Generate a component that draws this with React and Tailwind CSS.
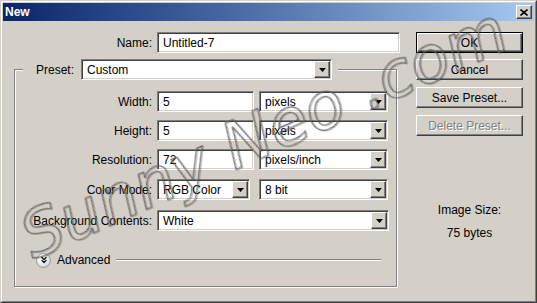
import { ChevronsDown } from "lucide-react";

const sunken =
  "border border-t-[#808080] border-l-[#808080] border-r-white border-b-white shadow-[inset_1px_1px_0_#404040,inset_-1px_-1px_0_#d4d0c8] bg-white";
const raised =
  "border border-t-white border-l-white border-r-[#404040] border-b-[#404040] shadow-[inset_-1px_-1px_0_#808080] bg-[#d4d0c8]";

const Field = ({ value, w }) => (
  <div className={`${sunken} ${w} h-[21px] flex items-center pl-[5px]`}>{value}</div>
);

const Select = ({ value, w }) => (
  <div className={`${sunken} ${w} h-[21px] flex items-center pl-[5px] pr-[1px]`}>
    <span className="flex-1">{value}</span>
    <div className={`${raised} w-[16px] h-[17px] flex items-center justify-center`}>
      <svg width="7" height="4" viewBox="0 0 7 4">
        <path d="M0 0h7L3.5 4z" fill="#000" />
      </svg>
    </div>
  </div>
);

const Row = ({ label, children, className = "" }) => (
  <div className={`flex items-center ${className}`}>
    <div className="w-[137px] text-right">{label}</div>
    <div className="ml-[5px] flex gap-[5px]">{children}</div>
  </div>
);

const Button = ({ children, className = "" }) => (
  <div className={`${raised} w-[107px] h-[21px] flex items-center justify-center ${className}`}>
    {children}
  </div>
);

const App = () => {
  return (
    <div className="w-[537px] h-[303px] bg-[#d4d0c8] border border-t-[#d4d0c8] border-l-[#d4d0c8] border-r-[#404040] border-b-[#404040] text-[12px] text-black font-['Liberation_Sans',Arial,sans-serif] relative overflow-hidden">
      <div className="h-full border border-t-white border-l-white border-r-[#808080] border-b-[#808080] p-[1px]">
        {/* title bar */}
        <div className="h-[18px] bg-gradient-to-r from-[#0a246a] to-[#a6caf0] flex items-center pl-[2px] pr-[2px]">
          <span className="text-white font-bold text-[12px] flex-1">New</span>
          <div className={`${raised} w-[16px] h-[14px] flex items-center justify-center`}>
            <svg width="8" height="7" viewBox="0 0 8 7">
              <path d="M0.5 0.5l7 6M7.5 0.5l-7 6" stroke="#000" strokeWidth="1.6" />
            </svg>
          </div>
        </div>

        <div className="flex">
          {/* left column */}
          <div className="w-[413px]">
            <div className="flex items-center mt-[11px]">
              <div className="w-[149px] text-right">Name:</div>
              <div className="ml-[5px]">
                <Field value="Untitled-7" w="w-[243px]" />
              </div>
            </div>

            <fieldset className="ml-[11px] mt-[6px] w-[383px] border border-[#808080] shadow-[inset_1px_1px_0_#fff,1px_1px_0_#fff] pt-[11px] pb-[18px] px-0 m-0">
              <legend className="ml-[8px] bg-[#d4d0c8]">
                <div className="flex items-center pl-[13px] pr-[6px]">
                  <span className="w-[40px]">Preset:</span>
                  <div className="ml-[5px]">
                    <Select value="Custom" w="w-[251px]" />
                  </div>
                </div>
              </legend>

              <Row label="Width:">
                <Field value="5" w="w-[97px]" />
                <Select value="pixels" w="w-[129px]" />
              </Row>
              <Row label="Height:" className="mt-[8px]">
                <Field value="5" w="w-[97px]" />
                <Select value="pixels" w="w-[129px]" />
              </Row>
              <Row label="Resolution:" className="mt-[8px]">
                <Field value="72" w="w-[97px]" />
                <Select value="pixels/inch" w="w-[129px]" />
              </Row>
              <Row label="Color Mode:" className="mt-[9px]">
                <Select value="RGB Color" w="w-[93px]" />
                <div className="ml-[4px]">
                  <Select value="8 bit" w="w-[129px]" />
                </div>
              </Row>
              <Row label="Background Contents:" className="mt-[10px]">
                <Select value="White" w="w-[232px]" />
              </Row>

              <div className="flex items-center mt-[21px] h-[16px] ml-[21px] mr-[15px]">
                <div className="w-[15px] h-[15px] rounded-full border border-[#9a9a9a] bg-[radial-gradient(circle_at_35%_30%,#ffffff,#e8e8e8_55%,#b8b8b8)] flex items-center justify-center">
                  <ChevronsDown size={10} strokeWidth={3} color="#000" />
                </div>
                <span className="ml-[6px]">Advanced</span>
                <div className="flex-1 ml-[6px] h-[2px] border-t border-t-[#808080] border-b border-b-white" />
              </div>
            </fieldset>
          </div>

          {/* right column */}
          <div className="flex flex-col mt-[11px]">
            <div className="w-[107px] h-[21px] border border-black shadow-[inset_1px_1px_0_#fff,inset_-1px_-1px_0_#404040,inset_-2px_-2px_0_#808080] flex items-center justify-center">
              OK
            </div>
            <Button className="mt-[6px]">Cancel</Button>
            <Button className="mt-[7px]">Save Preset...</Button>
            <Button className="mt-[7px] text-[#808080] [text-shadow:1px_1px_0_#fff]">Delete Preset...</Button>
            <div className="mt-[67px] flex flex-col items-center leading-[14px] gap-[9px]">
              <span>Image Size:</span>
              <span>75 bytes</span>
            </div>
          </div>
        </div>
      </div>

      {/* watermark */}
      <div className="absolute left-[36px] top-[204px] origin-bottom-left -rotate-[24deg] text-[64px] italic leading-none whitespace-nowrap text-transparent [-webkit-text-stroke:1px_#6a6a6a] [filter:drop-shadow(1px_1px_0_rgba(0,0,0,0.3))] font-['DejaVu_Sans',sans-serif] font-light pointer-events-none">
        Sunny Neo .com
      </div>
    </div>
  );
};

export default App;
